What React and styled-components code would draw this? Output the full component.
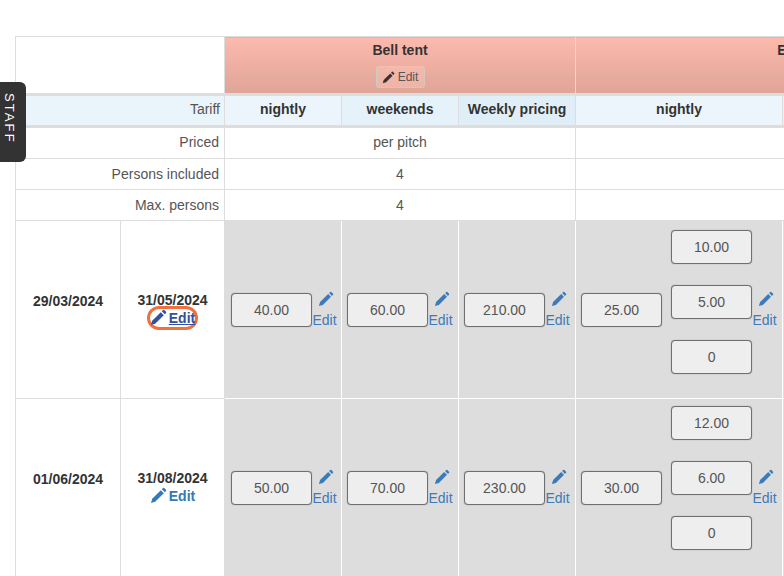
import React from "react";
import styled, { createGlobalStyle } from "styled-components";

const Global = createGlobalStyle`
  html, body { margin: 0; padding: 0; height: 576px; overflow: hidden; background: #fff; }
  body { font-family: "Liberation Sans", Arial, sans-serif; font-size: 14px; color: #333; }
`;

const seasons = [
  { from: "29/03/2024", to: "31/05/2024", active: true, lift: 15, a: ["40.00", "60.00", "210.00"], b: "25.00", c: ["10.00", "5.00", "0"] },
  { from: "01/06/2024", to: "31/08/2024", lift: 19, a: ["50.00", "70.00", "230.00"], b: "30.00", c: ["12.00", "6.00", "0"] },
];

const Pencil = () => (
  <svg viewBox="0 0 17 17" fill="currentColor">
    <path d="M1 16 L2.2 11.8 L10.8 3.2 L13.8 6.2 L5.2 14.8 Z" />
    <path d="M11.8 2.2 L13 1 Q13.6 .5 14.2 1 L16 2.8 Q16.5 3.4 16 4 L14.8 5.2 Z" />
  </svg>
);

const PriceEdit = () => (
  <EditStack>
    <Pencil />
    <span>Edit</span>
  </EditStack>
);

const App = () => (
  <Page>
    <Global />
    <StaffTab>STAFF</StaffTab>
    <Table>
      <colgroup>
        <col width="105" />
        <col width="104" />
        <col width="117" />
        <col width="117" />
        <col width="117" />
        <col width="207" />
        <col width="117" />
        <col width="117" />
      </colgroup>
      <tbody>
        <tr>
          <BlankHead colSpan={2} />
          <TentHead colSpan={3}>
            <TentName>Bell tent</TentName>
            <TentEdit><Pencil /> Edit</TentEdit>
          </TentHead>
          <TentHead colSpan={3}>
            <TentName>Eagle</TentName>
          </TentHead>
        </tr>
        <TariffRow>
          <TariffLabel colSpan={2}>Tariff</TariffLabel>
          <TariffCell>nightly</TariffCell>
          <TariffCell $shade={1}>weekends</TariffCell>
          <TariffCell $shade={2}>Weekly pricing</TariffCell>
          <TariffCell>nightly</TariffCell>
          <TariffCell $shade={1}>weekends</TariffCell>
          <TariffCell $shade={2}>Weekly pricing</TariffCell>
        </TariffRow>
        <InfoRow $height={32}>
          <InfoLabel colSpan={2} $raise={2}>Priced</InfoLabel>
          <InfoValue colSpan={3} $raise={2}>per pitch</InfoValue>
          <InfoValue colSpan={3} />
        </InfoRow>
        <InfoRow>
          <InfoLabel colSpan={2}>Persons included</InfoLabel>
          <InfoValue colSpan={3}>4</InfoValue>
          <InfoValue colSpan={3} />
        </InfoRow>
        <InfoRow>
          <InfoLabel colSpan={2}>Max. persons</InfoLabel>
          <InfoValue colSpan={3}>4</InfoValue>
          <InfoValue colSpan={3} />
        </InfoRow>
        {seasons.map((s) => (
          <SeasonRow key={s.from}>
            <DateCell $bottom={17}>{s.from}</DateCell>
            <DateCell $top={2}>
              <div>{s.to}</div>
              <DateEdit $active={s.active}>
                <Pencil />
                <DateEditText $active={s.active}>Edit</DateEditText>
              </DateEdit>
            </DateCell>
            {s.a.map((v, i) => (
              <PriceCell key={v} $lead={i === 0}>
                <PriceWrap>
                  <PriceBox>{v}</PriceBox>
                  <PriceEdit />
                </PriceWrap>
              </PriceCell>
            ))}
            <PriceCell>
              <PriceWrap>
                <PriceBox>{s.b}</PriceBox>
                <StackedPrices $lift={s.lift}>
                  {s.c.map((v) => (
                    <PriceBox key={v}>{v}</PriceBox>
                  ))}
                </StackedPrices>
                <PriceEdit />
              </PriceWrap>
            </PriceCell>
            <PriceCell />
            <PriceCell />
          </SeasonRow>
        ))}
      </tbody>
    </Table>
  </Page>
);

const Page = styled.div`
  position: relative;
  width: 784px;
  height: 576px;
  overflow: hidden;
  padding: 36px 0 0 15px;
  box-sizing: border-box;
`;

const StaffTab = styled.div`
  position: absolute;
  left: 0;
  top: 82px;
  width: 26px;
  height: 80px;
  box-sizing: border-box;
  padding: 0 7px 7px 0;
  display: flex;
  align-items: center;
  justify-content: center;
  background: #333;
  color: #fff;
  border-radius: 0 6px 6px 0;
  writing-mode: vertical-rl;
  font-size: 13px;
  letter-spacing: 2.1px;
`;

const Table = styled.table`
  width: 883px;
  table-layout: fixed;
  border-collapse: collapse;
  background: #fff;
`;

const BlankHead = styled.th`
  height: 56px;
  padding: 0;
  border: 1px solid #ddd;
  border-bottom: 3px solid #ddd;
`;

const TentHead = styled.th`
  height: 56px;
  padding: 0;
  vertical-align: top;
  text-align: center;
  border: 1px solid #ddd;
  border-bottom: 3px solid #ddd;
  background: linear-gradient(#fdb9ad, #dea597);
`;

const TentName = styled.div`
  margin-top: 6px;
  line-height: 15px;
  font-weight: bold;
`;

const TentEdit = styled.span`
  display: inline-flex;
  align-items: center;
  gap: 3px;
  box-sizing: border-box;
  width: 49px;
  height: 22px;
  margin-top: 8px;
  justify-content: center;
  border: 1px dotted #c3d6d0;
  border-radius: 3px;
  background: rgba(255, 200, 190, 0.4);
  font-size: 12px;
  font-weight: normal;
  color: #555;
  svg { width: 13px; height: 13px; color: #333; }
`;

const TariffRow = styled.tr`
  height: 32px;
`;

const TariffLabel = styled.td`
  padding: 0 4px 3px 0;
  text-align: right;
  color: #555;
  background: #eaf4fb;
  border: 1px solid #ddd;
  border-bottom: 3px solid #ddd;
`;

const shades = ["#ebf5fb", "#e6f2f9", "#e0eff7"];

const TariffCell = styled.td`
  padding: 0 0 3px;
  text-align: center;
  font-weight: bold;
  background: ${(p) => shades[p.$shade || 0]};
  border: 1px solid #ddd;
  border-bottom: 3px solid #ddd;
`;

const InfoRow = styled.tr`
  height: ${(p) => p.$height || 31}px;
`;

const InfoLabel = styled.td`
  padding: 0 5px ${(p) => p.$raise || 0}px 0;
  text-align: right;
  color: #555;
  border: 1px solid #ddd;
`;

const InfoValue = styled.td`
  padding: 0 0 ${(p) => p.$raise || 0}px;
  text-align: center;
  color: #555;
  border: 1px solid #ddd;
`;

const SeasonRow = styled.tr`
  height: 178px;
`;

const DateCell = styled.td`
  padding: ${(p) => p.$top || 0}px 0 ${(p) => p.$bottom || 0}px;
  text-align: center;
  line-height: 18px;
  font-weight: bold;
  border: 1px solid #ddd;
`;

const DateEdit = styled.span`
  display: inline-flex;
  align-items: center;
  gap: 2px;
  height: 18px;
  color: ${(p) => (p.$active ? "#3450a0" : "#337ab7")};
  border-radius: 11px;
  box-shadow: ${(p) => (p.$active ? "0 0 0 3px #f2703d" : "none")};
  svg { width: 17px; height: 17px; }
`;

const DateEditText = styled.span`
  text-decoration: ${(p) => (p.$active ? "underline" : "none")};
`;

const PriceCell = styled.td`
  padding: 0 0 0 ${(p) => (p.$lead ? 6 : 5)}px;
  background: #ddd;
  border: 1px solid #fff;
`;

const PriceWrap = styled.div`
  display: flex;
  align-items: center;
`;

const StackedPrices = styled.div`
  display: flex;
  flex-direction: column;
  gap: 21px;
  margin: 0 0 ${(p) => p.$lift}px 9px;
`;

const PriceBox = styled.div`
  flex-shrink: 0;
  width: 81px;
  height: 34px;
  box-sizing: border-box;
  display: flex;
  align-items: center;
  justify-content: center;
  background: #eee;
  border: 1px solid #6f6f6f;
  border-radius: 4px;
  box-shadow: 0 0 1px #777;
  color: #555;
`;

const EditStack = styled.div`
  flex-shrink: 0;
  width: 25px;
  display: flex;
  flex-direction: column;
  align-items: center;
  gap: 5px;
  color: #3d7ab8;
  svg { width: 16px; height: 16px; margin-left: 3px; }
`;

export default App;
